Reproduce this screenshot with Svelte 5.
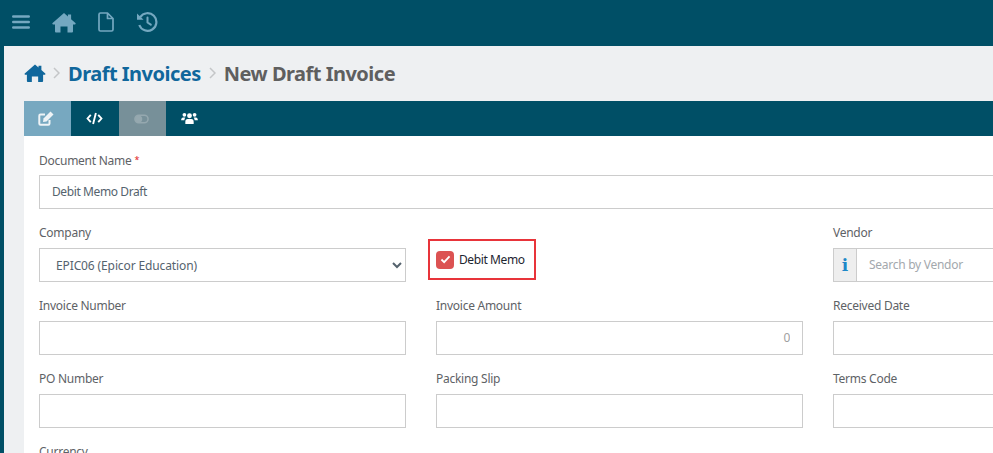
<script>
  const rows = [
    [
      { label: 'Invoice Number', value: '' },
      { label: 'Invoice Amount', value: '0', right: true },
      { label: 'Received Date', value: '' }
    ],
    [
      { label: 'PO Number', value: '' },
      { label: 'Packing Slip', value: '' },
      { label: 'Terms Code', value: '' }
    ]
  ];
</script>

<div class="page">
  <header class="topbar">
    <button class="nav menu" aria-label="Menu">
      <svg viewBox="0 0 18 16" width="18" height="16"><path d="M1.300 2.500h15.400M1.300 8h15.400M1.300 13.500h15.400" stroke="currentColor" stroke-width="2.600" stroke-linecap="round" fill="none"/></svg>
    </button>
    <button class="nav home" aria-label="Home">
      <svg viewBox="0 0 24 20" width="24" height="21"><path fill="currentColor" d="M12 .6 15.900 4V1.900h3.200v4.900L23.400 10.600a.8.8 0 0 1-.6 1.400H21v7a1 1 0 0 1-1 1h-4.500v-6h-7v6H4a1 1 0 0 1-1-1v-7H1.200a.8.8 0 0 1-.6-1.400z"/></svg>
    </button>
    <button class="nav file" aria-label="Document">
      <svg viewBox="0 0 16 20" width="16" height="20"><path fill="none" stroke="currentColor" stroke-width="1.700" stroke-linejoin="round" d="M2.500 1h7L15 6.500V17.500a1.500 1.500 0 0 1-1.500 1.500h-11A1.500 1.500 0 0 1 1 17.500v-15A1.500 1.500 0 0 1 2.500 1zM9.500 1v5.500H15"/></svg>
    </button>
    <button class="nav hist" aria-label="History">
      <svg viewBox="0 0 22 20" width="22" height="20"><path fill="none" stroke="currentColor" stroke-width="2.200" d="M4.200 5.200A8.800 8.800 0 1 1 3.300 13"/><path fill="currentColor" d="M1 1.500 7.600 7.800H1z"/><path fill="none" stroke="currentColor" stroke-width="2" stroke-linecap="round" stroke-linejoin="round" d="M11.500 5.500v5l3.300 2.200"/></svg>
    </button>
  </header>

  <main class="main">
    <nav class="crumbs">
      <svg class="crumb-home" viewBox="0 0 24 20" width="22" height="18"><path fill="currentColor" d="M12 .6 15.900 4V1.900h3.200v4.900L23.400 10.600a.8.8 0 0 1-.6 1.400H21v7a1 1 0 0 1-1 1h-4.500v-6h-7v6H4a1 1 0 0 1-1-1v-7H1.200a.8.8 0 0 1-.6-1.400z"/></svg>
      <svg class="sep" viewBox="0 0 7 12" width="7" height="12"><path d="M1 1l5 5-5 5" fill="none" stroke="currentColor" stroke-width="1.500"/></svg>
      <span class="crumb-link">Draft Invoices</span>
      <svg class="sep" viewBox="0 0 7 12" width="7" height="12"><path d="M1 1l5 5-5 5" fill="none" stroke="currentColor" stroke-width="1.500"/></svg>
      <span class="crumb-current">New Draft Invoice</span>
    </nav>

    <section class="card">
      <div class="tabs">
        <button class="tab active" aria-label="Edit">
          <svg class="edit-icon" viewBox="0 0 16 15" width="16" height="15"><path fill="none" stroke="currentColor" stroke-width="2" stroke-linejoin="round" d="M11.500 9v3.500a1.200 1.200 0 0 1-1.200 1.200H2.500a1.200 1.200 0 0 1-1.200-1.200V4.700a1.200 1.200 0 0 1 1.200-1.200H7"/><path fill="currentColor" d="M12.500.5l3 3-7 7-3.500.5.500-3.500z"/></svg>
        </button>
        <button class="tab code" aria-label="Code">
          <svg viewBox="0 0 18 14" width="17" height="13"><path fill="none" stroke="currentColor" stroke-width="2" d="M5 3 1.500 7 5 11M13 3l3.500 4L13 11M10.500 1 7.500 13"/></svg>
        </button>
        <button class="tab muted" aria-label="Toggle">
          <svg class="toggle-icon" viewBox="0 0 16 10" width="15" height="10"><rect x="1" y="1" width="14" height="8" rx="4" fill="none" stroke="currentColor" stroke-width="1.600"/><circle cx="5" cy="5" r="3.800" fill="currentColor"/></svg>
        </button>
        <button class="tab users" aria-label="Users">
          <svg viewBox="0 0 18 14" width="17" height="13"><g fill="currentColor"><circle cx="3.500" cy="3" r="2"/><circle cx="14.500" cy="3" r="2"/><circle cx="9" cy="4" r="2.600"/><path d="M0 9c0-2 1-3 2-3h2.500C3.700 7 3.500 8 3.500 9H0zM18 9c0-2-1-3-2-3h-2.500c.8 1 1 2 1 3H18zM4.500 13v-2.500C4.500 8.500 5.500 7.500 7 7.500h4c1.500 0 2.500 1 2.500 3V13z"/></g></svg>
        </button>
      </div>

      <form class="form">
        <div class="field full">
          <label for="doc">Document Name <span class="req">*</span></label>
          <input id="doc" class="control text" value="Debit Memo Draft" />
        </div>

        <div class="grid">
          <div class="field">
            <label for="company">Company</label>
            <select id="company" class="control">
              <option>EPIC06 (Epicor Education)</option>
            </select>
          </div>

          <div class="check-cell">
            <div class="check-mark">
              <span class="box">
                <svg viewBox="0 0 12 10" width="11" height="9"><path d="M1.500 5l3 3 6-6.500" fill="none" stroke="#fff" stroke-width="2"/></svg>
              </span>
              <span class="check-label">Debit Memo</span>
            </div>
          </div>

          <div class="field">
            <label for="vendor">Vendor</label>
            <div class="group">
              <span class="addon">i</span>
              <input id="vendor" class="control text joined" placeholder="Search by Vendor" />
            </div>
          </div>

          {#each rows as row}
            {#each row as f}
              <div class="field">
                <label for={f.label}>{f.label}</label>
                <input id={f.label} class="control text" class:right={f.right} value={f.value} />
              </div>
            {/each}
          {/each}

          <div class="field">
            <label for="currency">Currency</label>
          </div>
        </div>
      </form>
    </section>
  </main>
</div>

<style>
  :global(html), :global(body) {
    margin: 0;
    height: 100%;
    overflow: hidden;
  }
  * { box-sizing: border-box; }
  .page {
    width: 993px;
    height: 453px;
    overflow: hidden;
    background: #004f66;
    font-family: "Noto Sans", "Open Sans", sans-serif;
    color: #5e6266;
    display: flex;
    flex-direction: column;
  }
  .topbar {
    height: 46px;
    flex: none;
    display: flex;
    align-items: center;
    padding-left: 12px;
    color: #74a8c0;
  }
  .nav {
    background: none;
    border: 0;
    padding: 0;
    color: inherit;
    display: flex;
    align-items: center;
  }
  .menu { margin-right: 22px; margin-top: -2px; }
  .home { margin-right: 22px; margin-top: -2px; }
  .file { margin-right: 22px; margin-top: -2px; }
  .hist { margin-top: -2px; }

  .main {
    flex: 1;
    margin-left: 4px;
    background: #eef0f2;
    padding: 7px 0 0 20px;
    overflow: hidden;
  }
  .crumbs {
    height: 40px;
    margin-bottom: 8px;
    display: flex;
    align-items: center;
    white-space: nowrap;
    font-size: 20px;
    font-weight: 700;
    letter-spacing: -0.5px;
  }
  .crumb-home { color: #10679c; margin-right: 7px; }
  .sep { color: #c4c6c8; margin-right: 8px; }
  .crumb-link { color: #10679c; margin-right: 8px; }
  .crumb-current { color: #5f5f5f; }

  .card {
    width: 1240px;
    background: #fff;
    height: 360px;
  }
  .tabs {
    height: 35px;
    background: #004f66;
    display: flex;
  }
  .tab {
    width: 47.300px;
    border: 0;
    padding: 0;
    background: none;
    color: #fff;
    display: flex;
    align-items: center;
    justify-content: center;
  }
  .tab.active { background: #77a8c0; color: #eef3f6; }
  .tab.muted { background: #779099; color: #95a8af; }
  .edit-icon { margin-right: 3px; }
  .toggle-icon { margin-right: 2px; }

  .form { padding: 15px 15px 0; }
  .field { display: flex; flex-direction: column; min-width: 0; }
  .full { margin-bottom: 15px; width: 1100px; }
  label {
    height: 24px;
    font-size: 12px;
    line-height: 18px;
    letter-spacing: -0.26px;
    color: #5e6266;
    white-space: nowrap;
  }
  .req { color: #e02020; font-size: 9px; vertical-align: 2px; }
  .control {
    height: 34px;
    width: 100%;
    border: 1px solid #cccccc;
    background: #fff;
    border-radius: 0;
    padding: 0 12px;
    font: 12px "Noto Sans", "Open Sans", sans-serif;
    letter-spacing: -0.12px;
    color: #55636e;
    outline: 0;
  }
  .text { padding-bottom: 2px; letter-spacing: -0.4px; }
  .joined { letter-spacing: -0.27px; }
  .control::placeholder { color: #a3a8ad; opacity: 1; }
  .control.right { text-align: right; color: #a0a0a0; }
  .grid {
    display: grid;
    grid-template-columns: repeat(3, 367px);
    column-gap: 30px;
    row-gap: 15px;
  }
  .check-cell {
    display: flex;
    align-items: flex-end;
    padding-bottom: 2px;
    margin-left: -8px;
  }
  .check-mark {
    width: 108px;
    height: 41px;
    border: 2px solid #e8343a;
    display: flex;
    align-items: center;
    padding-left: 6px;
    gap: 5px;
  }
  .box {
    width: 18px;
    height: 18px;
    border-radius: 4px;
    background: #dc5252;
    display: flex;
    align-items: center;
    justify-content: center;
  }
  .check-label { font-size: 12px; letter-spacing: -0.4px; color: #1d2530; white-space: nowrap; }
  .group { display: flex; }
  .addon {
    flex: none;
    width: 23px;
    height: 34px;
    border: 1px solid #cccccc;
    border-right: 0;
    background: #eeeeee;
    color: #1e88c8;
    font: 700 17px/32px "DejaVu Serif", serif;
    text-align: center;
  }
  .joined { flex: 1; min-width: 0; }
</style>
